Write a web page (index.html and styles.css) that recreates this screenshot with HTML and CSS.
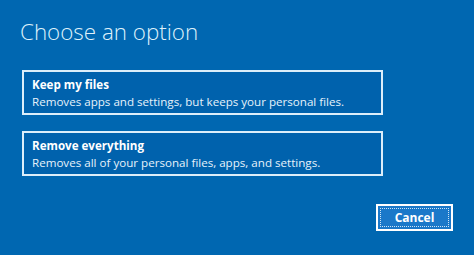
FILE: index.html
```html
<!DOCTYPE html>
<html>
<head>
<meta charset="utf-8">
<link rel="stylesheet" href="styles.css">
</head>
<body>
<div class="screen">
  <h1 class="title">Choose an option</h1>
  <div class="options">
    <div class="option">
      <div class="option-title">Keep my files</div>
      <div class="option-desc">Removes apps and settings, but keeps your personal files.</div>
    </div>
    <div class="option">
      <div class="option-title">Remove everything</div>
      <div class="option-desc">Removes all of your personal files, apps, and settings.</div>
    </div>
  </div>
  <div class="actions">
    <button class="btn"><span class="btn-focus">Cancel</span></button>
  </div>
</div>
</body>
</html>
```
FILE: styles.css
```css
html, body {
  margin: 0;
  padding: 0;
}
body {
  width: 474px;
  height: 255px;
  background: #0067b1;
  font-family: "Open Sans", "Noto Sans", sans-serif;
  color: #ffffff;
  overflow: hidden;
}
.screen {
  padding: 16px 0 0 20px;
  display: flex;
  flex-direction: column;
}
.title {
  margin: 0;
  font-size: 22.4px;
  font-weight: 300;
  line-height: 32px;
  color: #dff1fb;
}
.options {
  margin-top: 22px;
  display: flex;
  flex-direction: column;
  gap: 16px;
  width: 361px;
  margin-left: 2px;
}
.option {
  border: 2px solid #dceefa;
  background: #0062ad;
  padding: 4px 8px 4px 8px;
  height: 45px;
  box-sizing: border-box;
  display: flex;
  flex-direction: column;
  justify-content: center;
}
.option-title {
  font-size: 11.6px;
  font-weight: 700;
  line-height: 17px;
}
.option-desc {
  font-size: 11.6px;
  line-height: 17px;
  color: #e6f2fb;
}
.actions {
  display: flex;
  justify-content: flex-end;
  margin-top: 28px;
  padding-right: 21px;
}
.btn {
  width: 77px;
  height: 27px;
  padding: 2px;
  border: 2px solid #ffffff;
  background: #1a78c9;
  box-sizing: border-box;
  font-family: inherit;
  cursor: pointer;
}
.btn-focus {
  display: flex;
  align-items: center;
  justify-content: center;
  height: 100%;
  border: 1px dotted #cfe4f5;
  box-sizing: border-box;
  color: #ffffff;
  font-size: 12px;
  font-weight: 700;
}
```
